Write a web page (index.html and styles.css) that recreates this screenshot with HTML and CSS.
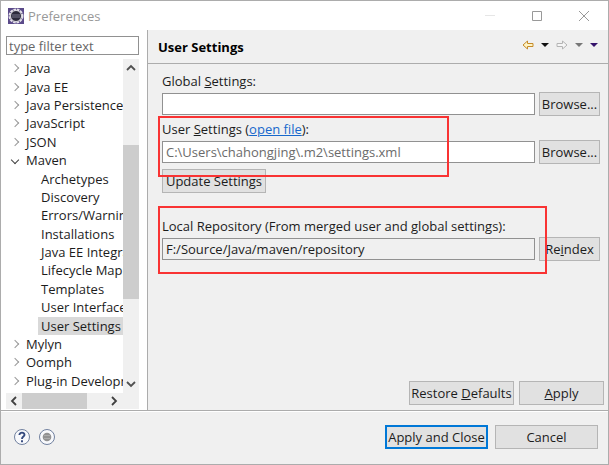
FILE: index.html
```html
<!DOCTYPE html>
<html lang="en">
<head>
<meta charset="utf-8">
<title>Preferences</title>
<link rel="stylesheet" href="styles.css">
</head>
<body>
<div class="window">
  <header class="titlebar">
    <svg class="logo" width="16" height="16" viewBox="0 0 16 16"><rect width="16" height="16" fill="#5b4a8a"/><circle cx="8" cy="8" r="6.300" fill="#33264f" stroke="#e4e1ea" stroke-width="2.400" stroke-dasharray="2.600 .7"/><circle cx="8" cy="8" r="5.500" fill="#2c2a3c" stroke="#dcdae2"/><path d="M4 7h8M4 9h8" stroke="#77748a"/></svg>
    <h1 class="caption">Preferences</h1>
    <div class="window-buttons">
      <button class="icon-button" aria-label="Minimize"><svg width="12" height="12"><path d="M1 5.500h10" stroke="#e6e6e6"/></svg></button>
      <button class="icon-button" aria-label="Maximize"><svg width="12" height="12"><path d="M1.500 1.500h9v9h-9z" fill="none" stroke="#999"/></svg></button>
      <button class="icon-button" aria-label="Close"><svg width="12" height="12"><path d="M1 1l10 10M11 1L1 11" stroke="#999"/></svg></button>
    </div>
  </header>
  <div class="body">
    <nav class="sidebar">
      <input class="field filter" type="text" placeholder="type filter text" aria-label="Filter">
      <div class="tree-pane">
        <ul class="tree" role="tree">
          <li class="node" role="treeitem"><i class="chevron"></i><span>Java</span></li>
          <li class="node" role="treeitem"><i class="chevron"></i><span>Java EE</span></li>
          <li class="node" role="treeitem"><i class="chevron"></i><span>Java Persistence</span></li>
          <li class="node" role="treeitem"><i class="chevron"></i><span>JavaScript</span></li>
          <li class="node" role="treeitem"><i class="chevron"></i><span>JSON</span></li>
          <li class="node" role="treeitem" aria-expanded="true"><i class="chevron open"></i><span>Maven</span></li>
          <li class="node child" role="treeitem"><span>Archetypes</span></li>
          <li class="node child" role="treeitem"><span>Discovery</span></li>
          <li class="node child" role="treeitem"><span>Errors/Warnings</span></li>
          <li class="node child" role="treeitem"><span>Installations</span></li>
          <li class="node child" role="treeitem"><span>Java EE Integration</span></li>
          <li class="node child" role="treeitem"><span>Lifecycle Mappings</span></li>
          <li class="node child" role="treeitem"><span>Templates</span></li>
          <li class="node child" role="treeitem"><span>User Interface</span></li>
          <li class="node child" role="treeitem" aria-selected="true"><span class="selected">User Settings</span></li>
          <li class="node" role="treeitem"><i class="chevron"></i><span>Mylyn</span></li>
          <li class="node" role="treeitem"><i class="chevron"></i><span>Oomph</span></li>
          <li class="node" role="treeitem"><i class="chevron"></i><span>Plug-in Development</span></li>
        </ul>
        <div class="scroll vertical">
          <svg width="16" height="18"><path d="M4 11l4-4 4 4" fill="none" stroke="#505050" stroke-width="1.800"/></svg>
          <div class="track"><div class="thumb"></div></div>
          <svg width="16" height="18"><path d="M4 7l4 4 4-4" fill="none" stroke="#505050" stroke-width="1.800"/></svg>
        </div>
        <div class="scroll horizontal">
          <svg width="16" height="16"><path d="M10 4L6 8l4 4" fill="none" stroke="#404040" stroke-width="1.800"/></svg>
          <div class="track"><div class="thumb"></div></div>
          <svg width="16" height="16"><path d="M5 4l4 4-4 4" fill="none" stroke="#404040" stroke-width="1.800"/></svg>
        </div>
      </div>
    </nav>
    <main class="page">
      <div class="page-head">
        <h2 class="page-title">User Settings</h2>
        <div class="history">
          <button class="icon-button" aria-label="Back"><svg width="12" height="10"><path d="M1 5l4.500-4v2.500h5.500v3H5.500V9z" fill="#fff4c4" stroke="#c58b2a" stroke-linejoin="round"/></svg></button>
          <button class="icon-button" aria-label="Back history"><svg width="8" height="10"><path d="M0 3h8L4 7z" fill="#111"/></svg></button>
          <button class="icon-button" aria-label="Forward"><svg width="12" height="10"><path d="M11 5L6.500 1v2.500H1v3h5.500V9z" fill="#f6f6f6" stroke="#b4b4b4" stroke-linejoin="round"/></svg></button>
          <button class="icon-button" aria-label="Forward history"><svg width="8" height="10"><path d="M0 3h8L4 7z" fill="#777"/></svg></button>
          <button class="icon-button" aria-label="Menu"><svg width="8" height="10"><path d="M0 3h8L4 7z" fill="#35136b"/></svg></button>
        </div>
      </div>
      <form class="form">
        <div class="group">
          <label class="label" for="global">Global <u>S</u>ettings:</label>
          <div class="row"><input class="field" id="global" type="text"><button class="button" type="button">Browse...</button></div>
        </div>
        <div class="group user">
          <div class="label"><label for="user">User <u>S</u>ettings</label> (<a class="link" href="#user">open file</a>):</div>
          <div class="row"><input class="field muted" id="user" type="text" value="C:\Users\chahongjing\.m2\settings.xml"><button class="button" type="button">Browse...</button></div>
          <button class="button update" type="button">Update Settings</button>
        </div>
        <div class="group local">
          <label class="label" for="local">Local Repository (From merged user and global settings):</label>
          <div class="row"><input class="field readonly" id="local" type="text" readonly value="F:/Source/Java/maven/repository"><button class="button" type="button">Re<u>i</u>ndex</button></div>
        </div>
      </form>
      <div class="page-actions">
        <button class="button restore" type="button">Restore <u>D</u>efaults</button>
        <button class="button apply" type="button"><u>A</u>pply</button>
      </div>
    </main>
  </div>
  <footer class="footer">
    <button class="icon-button" aria-label="Help"><svg width="18" height="18"><circle cx="9" cy="9" r="7.500" fill="#f8f9fc" stroke="#71819f"/><path d="M6.400 7.100C6.400 3.700 11.700 3.900 11.500 7c-.1 1.500-2.500 1.800-2.500 3.900M9 12.200v2" fill="none" stroke="#34497e" stroke-width="1.900"/></svg></button>
    <button class="icon-button" aria-label="Record"><svg width="18" height="18"><circle cx="9" cy="9" r="7.500" fill="#f8f9fc" stroke="#71819f"/><circle cx="9" cy="9" r="4.300" fill="#929292"/><path d="M6 7.500h6M6 10.500h6" stroke="#adadad"/></svg></button>
    <div class="dialog-actions">
      <button class="button primary" type="button">Apply and Close</button>
      <button class="button" type="button">Cancel</button>
    </div>
  </footer>
</div>
</body>
</html>
```
FILE: styles.css
```css
*, *::after { box-sizing: border-box; }

body {
  margin: 0;
  font: 13px/18px "Open Sans", "Noto Sans", sans-serif;
  color: #1c1c1c;
}

.window {
  display: flex;
  flex-direction: column;
  height: 100vh;
  border: 1px solid #acacac;
  background: #f0f0f0;
  overflow: hidden;
}

.titlebar {
  display: flex;
  align-items: center;
  gap: 4px;
  height: 29px;
  padding: 0 18px 0 7px;
  background: #fff;
}

.caption {
  flex: 1;
  margin: 0;
  font-size: 13px;
  font-weight: 400;
  color: #999;
}

.window-buttons { display: flex; gap: 35px; }

.icon-button {
  display: flex;
  padding: 0;
  border: 0;
  background: none;
}

.body {
  display: flex;
  flex: 1;
  min-height: 0;
  border-bottom: 1px solid #acacac;
}

.sidebar {
  display: flex;
  flex-direction: column;
  gap: 4px;
  width: 147px;
  padding: 6px 8px 1px 5px;
  border-right: 1px solid #acacac;
  background: #fff;
}

.field {
  flex: 1;
  min-width: 0;
  height: 22px;
  padding: 0 3px;
  border: 1px solid #919191;
  background: #fff;
  font: inherit;
  color: inherit;
}

.filter { flex: none; height: 19px; padding: 0 2px; }
.filter::placeholder { color: #666; }
.muted { color: #6b6b6b; }
.readonly { background: #f0f0f0; }

.tree-pane {
  display: grid;
  grid-template: 1fr 16px / 1fr 16px;
  flex: 1;
  min-height: 0;
}

.tree {
  display: grid;
  grid-auto-rows: 1fr;
  min-width: 0;
  min-height: 0;
  margin: 0;
  padding: 0 0 3px;
  overflow: hidden;
  list-style: none;
}

.node {
  display: flex;
  align-items: center;
  gap: 8px;
  padding-left: 6px;
  white-space: nowrap;
}

.child { padding-left: 32px; }
.child span { padding: 0 3px; }
.selected { background: #d9d9d9; }

.chevron {
  flex: none;
  width: 6px;
  height: 6px;
  border: solid #999;
  border-width: 1px 1px 0 0;
  transform: rotate(45deg);
}

.open { border-color: #404040; transform: rotate(135deg); }

.scroll { display: flex; background: #f0f0f0; }
.vertical { flex-direction: column; }
.horizontal { grid-column: 1 / -1; }
.track { display: flex; flex: 1; }
.vertical .track { flex-direction: column; padding-top: 68px; }
.thumb { background: #cdcdcd; }
.vertical .thumb { height: 154px; }
.horizontal .thumb { width: 65px; }
.horizontal { padding-right: 16px; }

.page {
  display: flex;
  flex-direction: column;
  flex: 1;
  min-width: 0;
}

.page-head {
  display: flex;
  align-items: center;
  justify-content: space-between;
  height: 34px;
  padding: 0 10px;
  border-bottom: 1px solid #acacac;
}

.page-title { margin: 0; font-size: 13px; font-weight: 700; color: #000; }
.history { display: flex; gap: 7px; margin-top: -4px; }

.form { flex: 1; padding: 8px 8px 0 14px; }
.group { position: relative; }
.label { display: block; }
.row { display: flex; align-items: center; gap: 4px; margin-top: 2px; }
.user { margin-top: 4px; }
.local { margin-top: 24px; }

.user::after,
.local::after {
  content: "";
  position: absolute;
  left: -4px;
  border: 2px solid #f93333;
  pointer-events: none;
}

.user::after { top: -4px; width: 291px; height: 61px; }
.local::after { top: -11px; right: 53px; height: 68px; }

.button {
  height: 24px;
  padding: 0;
  border: 1px solid #b5b5b5;
  background: #e1e1e1;
  font: inherit;
  color: inherit;
}

.row .button { width: 61px; }
.update { width: 104px; margin-top: 5px; }
.link { color: #1768cc; }

.page-actions {
  display: flex;
  justify-content: flex-end;
  gap: 5px;
  padding: 0 4px 5px;
}

.restore { width: 105px; }
.apply { width: 85px; }

.footer {
  display: flex;
  align-items: center;
  gap: 7px;
  height: 53px;
  padding: 0 10px 2px 12px;
  border-top: 1px solid #fff;
}

.dialog-actions { display: flex; gap: 7px; margin-left: auto; }
.dialog-actions .button { width: 103px; }
.dialog-actions .primary { border: 2px solid #0078d7; }
```
